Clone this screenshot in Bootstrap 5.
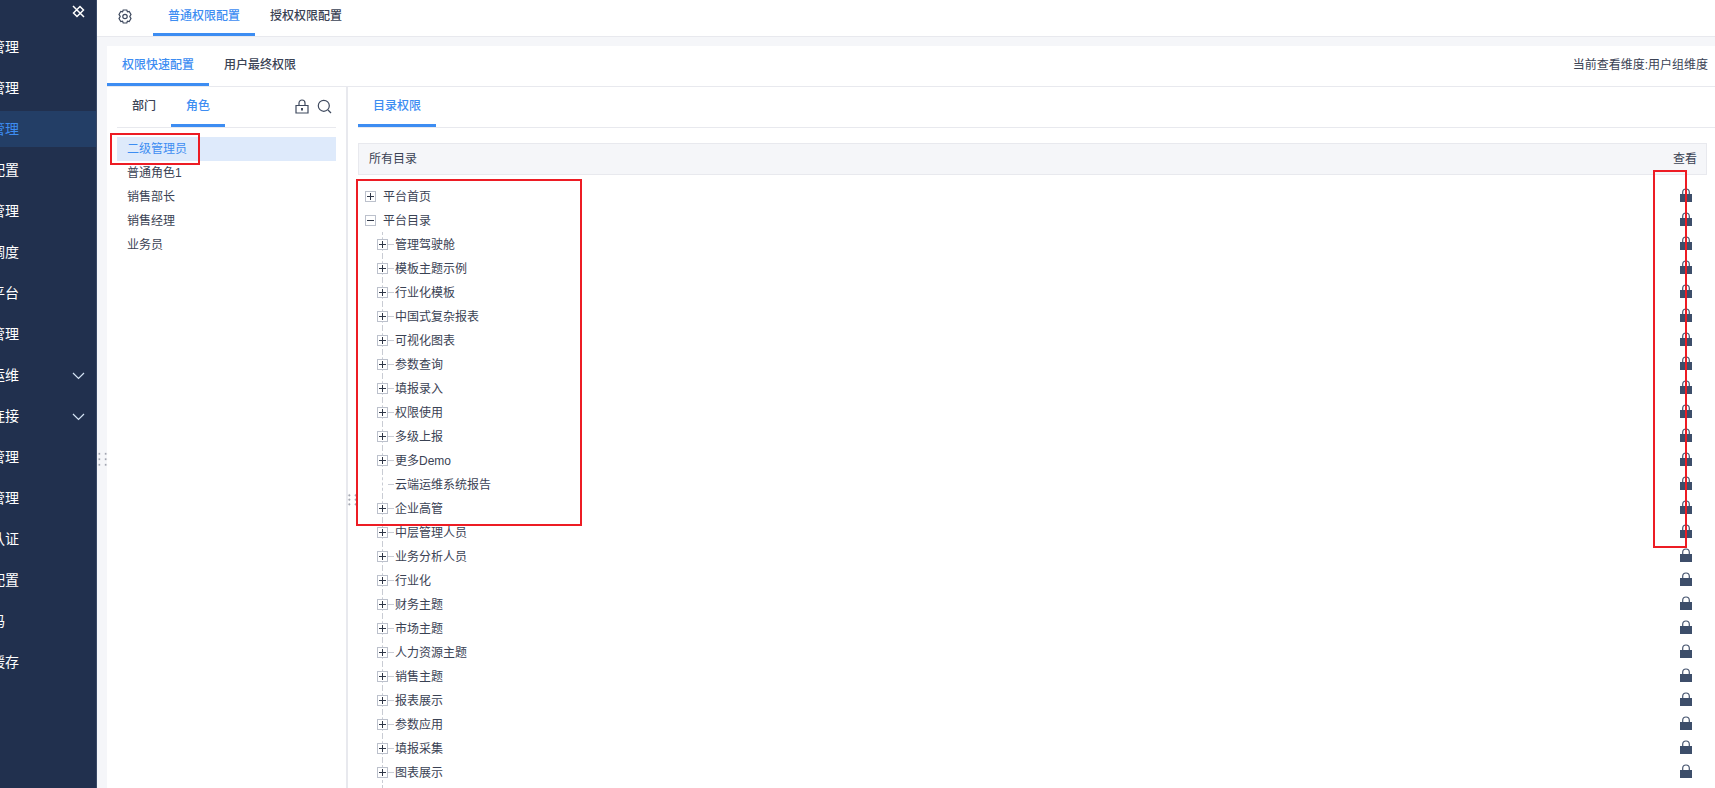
<!DOCTYPE html>
<html lang="zh">
<head>
<meta charset="utf-8">
<title>权限配置</title>
<link href="https://cdn.jsdelivr.net/npm/bootstrap@5.3.0/dist/css/bootstrap.min.css" rel="stylesheet">
<style>
html,body{height:100%;overflow:hidden}
body{font-family:"Liberation Sans","Noto Sans CJK SC",sans-serif;font-size:12px;color:#3a4254;background:#f5f6f9}
.shell{height:788px;position:relative;overflow:hidden}
.sidenav{width:97px;background:#21304e;color:#fff;overflow:hidden;border-right:1px solid #3a4a68;padding-top:27px;position:relative}
.pin{position:absolute;left:71px;top:4px}
.sideitem{height:41px;display:flex;align-items:center;font-size:14px;white-space:nowrap;flex:none}
.sideitem .lbl{width:28px;margin-left:-9px;flex:none}
.sideitem.on{background:#233e66;color:#3d8df2;height:36px;margin-top:2px;margin-bottom:3px}
.sideitem svg{margin-left:53px;flex:none}
.sideitem.short .lbl{width:14px}
.mainwrap{min-width:0}
.topbar{height:37px;background:#fff;border-bottom:1px solid #e8e9ee}
.gear{margin:9px 21px 0 21px}
.toptab{width:102px;height:36px;line-height:32px;text-align:center;font-weight:500;color:#3a4254}
.toptab.on,.subtab.on,.roletab.on,.dirtab{color:#3d8df2;border-bottom:3px solid #3d8df2}
.panel{margin:9px 0 0 10px;background:#fff;min-height:0}
.subbar{height:41px;border-bottom:1px solid #e8e9ee;padding-right:7px}
.subtab{width:102px;height:40px;line-height:38px;text-align:center;font-weight:500;color:#3a4254}
.dim{line-height:38px}
.bodyrow{min-height:0}
.leftcol{width:241px;border-right:2px solid #e8e9ee;padding:0 10px}
.rolebar{height:41px;border-bottom:1px solid #e8e9ee}
.roletab{width:54px;height:40px;line-height:38px;text-align:center;font-weight:500}
.roleicons{margin-left:auto;padding-right:4px;gap:8px;height:38px}
.rolelist{padding-top:9px}
.roleitem{height:24px;line-height:24px;padding-left:10px}
.roleitem.on{background:#deeafb;color:#3d8df2}
.rightcol{padding:0 8px 0 10px;min-width:0}
.dirbar{height:41px;border-bottom:1px solid #e8e9ee;margin:0 -8px 0 0}
.dirtab{width:78px;height:40px;line-height:38px;text-align:center;font-weight:500}
.dirhead{height:32px;margin-top:15px;background:#f5f6f9;border:1px solid #e8e9ee;padding:0 9px 0 10px}
.treerows{padding-top:9px}
.treerow{height:24px;position:relative;padding-right:9px}
.treerow.root{padding-left:7px}
.treerow.kid{padding-left:19px}
.treelbl{padding-top:2px}
.tog{width:11px;height:11px;border:1px solid #bcc1cc;position:relative;flex:none;margin-right:7px;background:#fff}
.tog::before{content:"";position:absolute;left:1px;right:1px;top:4px;height:1px;background:#2f3747}
.tog.plus::after{content:"";position:absolute;top:1px;bottom:1px;left:4px;width:1px;background:#2f3747}
.kid::before{content:"";position:absolute;left:24px;top:0;bottom:0;border-left:1px dashed #c9ccd4}
.kid:last-child::before{bottom:-24px}
.kid .tog{z-index:1}
.kid::after{content:"";position:absolute;left:30px;width:6px;top:12px;border-top:1px dashed #c9ccd4}
.notog{width:11px;margin-right:7px;flex:none}
.lockico{margin-left:auto;margin-right:6px;margin-bottom:2px;flex:none}
.grip{position:absolute;width:13px;background-image:radial-gradient(circle,#8b8f9c 0.8px,transparent 1.1px);z-index:2}
.grip.a{left:96px;top:451px;height:16.5px;background-size:6.5px 5.5px}
.grip.b{left:346px;top:493px;height:13.5px;background-size:6.5px 4.5px}
.mark-box{position:absolute;border:2px solid #ed1c24;z-index:3;pointer-events:none}
.mb1{left:110px;top:133px;width:90px;height:32px}
.mb2{left:356px;top:179px;width:226px;height:347px}
.mb3{left:1653px;top:170px;width:34px;height:378px}
</style>
</head>
<body>
<div class="shell d-flex">
  <aside class="sidenav d-flex flex-column flex-shrink-0" id="side">
    <svg class="pin" width="15" height="15" viewBox="0 0 15 15" fill="none" stroke="#fff" stroke-width="1.500"><path d="M2.500 9 9 2.500 12.500 6 6 12.500zM2 2l11 11"/></svg>
  </aside>
  <div class="mainwrap d-flex flex-column flex-grow-1">
    <div class="topbar d-flex align-items-start flex-shrink-0">
      <svg class="gear" width="14" height="15" viewBox="0 0 14 15" fill="none" stroke="#3f4a5f" stroke-width="1.200"><path d="M5.200 1h3.600l.6 1.800 1.800-.4 1.800 3-1.200 2.100 1.200 2.100-1.800 3-1.800-.4-.6 1.800H5.200l-.6-1.800-1.800.4-1.800-3 1.200-2.100-1.200-2.100 1.800-3 1.800.4z"/><circle cx="7" cy="7.500" r="2.200"/></svg>
      <div class="toptab on">普通权限配置</div>
      <div class="toptab">授权权限配置</div>
    </div>
    <div class="panel d-flex flex-column flex-grow-1">
      <div class="subbar d-flex flex-shrink-0">
        <div class="subtab on">权限快速配置</div>
        <div class="subtab">用户最终权限</div>
        <div class="dim ms-auto">当前查看维度:用户组维度</div>
      </div>
      <div class="bodyrow d-flex flex-grow-1">
        <div class="leftcol flex-shrink-0">
          <div class="rolebar d-flex align-items-start">
            <div class="roletab">部门</div>
            <div class="roletab on">角色</div>
            <div class="roleicons d-flex align-items-center">
              <svg width="14" height="15" viewBox="0 0 14 15" fill="none" stroke="#3f4a5f" stroke-width="1.200"><path d="M1 14V6.500h12V14zM4 6.500V4a3 3 0 0 1 6 0v2.500"/><path d="M7 9v2.500" stroke-width="2"/></svg>
              <svg width="15" height="15" viewBox="0 0 15 15" fill="none" stroke="#3f4a5f" stroke-width="1.200"><circle cx="6.800" cy="6.800" r="5.500"/><path d="M11 11l3 3"/></svg>
            </div>
          </div>
          <div class="rolelist">
            <div class="roleitem on">二级管理员</div>
            <div class="roleitem">普通角色1</div>
            <div class="roleitem">销售部长</div>
            <div class="roleitem">销售经理</div>
            <div class="roleitem">业务员</div>
          </div>
        </div>
        <div class="rightcol d-flex flex-column flex-grow-1">
          <div class="dirbar d-flex flex-shrink-0"><div class="dirtab">目录权限</div></div>
          <div class="dirhead d-flex align-items-center justify-content-between flex-shrink-0"><span>所有目录</span><span>查看</span></div>
          <div class="treerows" id="tree"></div>
        </div>
      </div>
    </div>
  </div>
  <div class="grip a"></div>
  <div class="grip b"></div>
  <div class="mark-box mb1"></div>
  <div class="mark-box mb2"></div>
  <div class="mark-box mb3"></div>
</div>
<script>
var side=document.getElementById('side');
var chev='<svg width="13" height="8" viewBox="0 0 13 8" fill="none" stroke="#d5e4f5" stroke-width="1.200"><path d="M1 1l5.500 5.500L12 1"/></svg>';
[['管理'],['管理'],['管理',1],['配置'],['管理'],['调度'],['平台'],['管理'],['运维',0,1],['连接',0,1],['管理'],['管理'],['认证'],['配置'],['码',0,0,1],['缓存']].forEach(function(i){
  var d=document.createElement('div');
  d.className='sideitem'+(i[1]?' on':'')+(i[3]?' short':'');
  d.innerHTML='<span class="lbl">'+i[0]+'</span>'+(i[2]?chev:'');
  side.appendChild(d);
});
var lock='<svg class="lockico" width="12" height="14" viewBox="0 0 12 14"><path d="M2.700 7V4.300a3.300 3.300 0 0 1 6.600 0V7" fill="none" stroke="#46556f" stroke-width="1.200"/><rect y="6" width="12" height="8" fill="#3d4e6a"/></svg>';
var t=document.getElementById('tree');
var rows=[['平台首页','r+'],['平台目录','r-'],['管理驾驶舱'],['模板主题示例'],['行业化模板'],['中国式复杂报表'],['可视化图表'],['参数查询'],['填报录入'],['权限使用'],['多级上报'],['更多Demo'],['云端运维系统报告','n'],['企业高管'],['中层管理人员'],['业务分析人员'],['行业化'],['财务主题'],['市场主题'],['人力资源主题'],['销售主题'],['报表展示'],['参数应用'],['填报采集'],['图表展示']];
rows.forEach(function(r){
  var k=r[1]||'k+';
  var d=document.createElement('div');
  d.className='treerow d-flex align-items-center '+(k[0]==='r'?'root':'kid');
  var tog=k==='n'?'<span class="notog"></span>':'<span class="tog'+(k==='r-'?'':' plus')+'"></span>';
  d.innerHTML=tog+'<span class="treelbl">'+r[0]+'</span>'+lock;
  t.appendChild(d);
});
</script>
<script src="https://cdn.jsdelivr.net/npm/bootstrap@5.3.0/dist/js/bootstrap.bundle.min.js"></script>
</body>
</html>
